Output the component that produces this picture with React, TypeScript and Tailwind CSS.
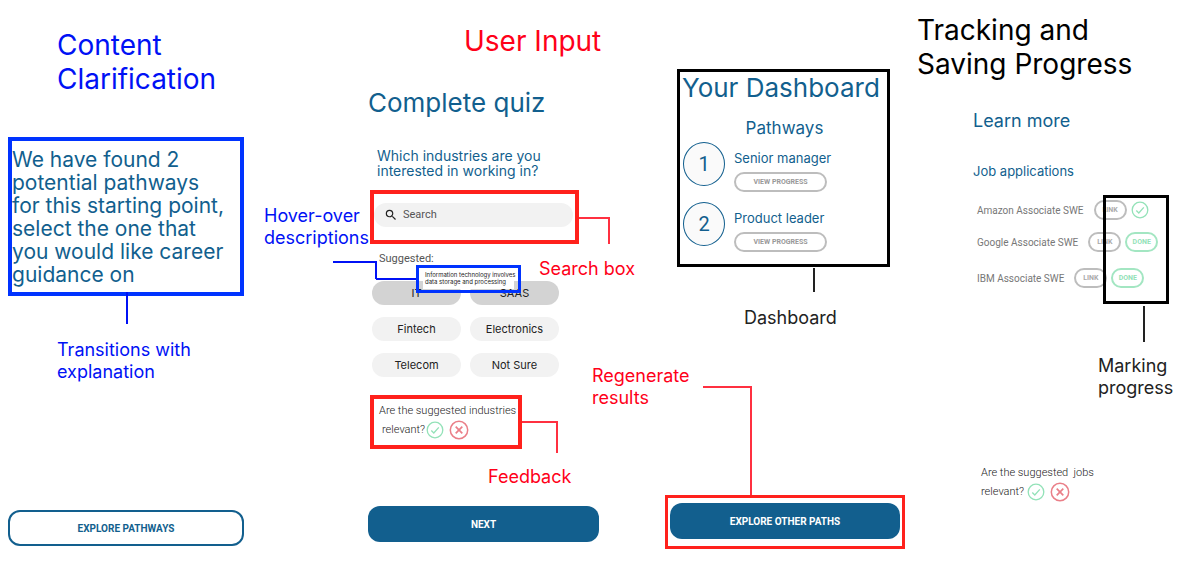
import type { ReactNode } from "react";
import { MdSearch } from "react-icons/md";

const note = "font-[Inter,sans-serif] text-[18px] leading-[22px]";
const heading = "font-[Inter,sans-serif] text-[28px] leading-[34px] font-normal";
const primary =
  "h-9 w-full rounded-xl bg-[#125f8e] font-[Roboto,sans-serif] text-[10px] font-bold text-white";

function Note({ className, children }: { className: string; children: ReactNode }) {
  return <p className={`${note} absolute whitespace-nowrap ${className}`}>{children}</p>;
}

function CheckButton({ label }: { label: string }) {
  return (
    <button type="button" aria-label={label} className="shrink-0">
      <svg viewBox="0 0 18 18" className="size-[18px]" fill="none" stroke="#93e2b8" strokeWidth="1.3">
        <circle cx="9" cy="9" r="7.8" />
        <path d="M5.3 9.5 7.8 12l5-5.6" />
      </svg>
    </button>
  );
}

function CrossButton({ label }: { label: string }) {
  return (
    <button type="button" aria-label={label} className="shrink-0">
      <svg viewBox="0 0 20 20" className="size-5" fill="none" stroke="#ea7f88" strokeWidth="1.5">
        <circle cx="10" cy="10" r="8.7" />
        <path d="m6.7 6.7 6.6 6.6m0-6.6-6.6 6.6" strokeWidth="1.7" />
      </svg>
    </button>
  );
}

function Chip({ label, active = false }: { label: string; active?: boolean }) {
  return (
    <button
      type="button"
      className={`h-6 rounded-full text-center text-[11px] text-[#222] ${active ? "bg-[#d3d3d3]" : "bg-[#f2f2f2]"}`}
    >
      {label}
    </button>
  );
}

function Pathway({ step, title }: { step: number; title: string }) {
  return (
    <li className="flex gap-[9px]">
      <span className="flex h-11 w-[42px] items-center justify-center rounded-[50%] border border-[#125f8e] bg-[#fafafa] font-[Roboto,sans-serif] text-[20px] text-[#125f8e]">
        {step}
      </span>
      <div className="flex flex-col items-start pt-2">
        <h4 className="text-[13px] leading-4">{title}</h4>
        <button
          type="button"
          className="mt-[6px] h-5 w-[93px] rounded-full border-2 border-[#bdbdbd] font-[Roboto,sans-serif] text-[7px] font-bold text-[#999]"
        >
          VIEW PROGRESS
        </button>
      </div>
    </li>
  );
}

function Job({ title, done = true }: { title: string; done?: boolean }) {
  const pill = "h-5 w-[33px] rounded-full border-2 text-[7px] font-bold";
  return (
    <li className="flex h-5 items-center font-[Roboto,sans-serif] text-[#777]">
      <span className="mr-[10px] text-[10px] whitespace-nowrap">{title}</span>
      <a href="#link" className={`${pill} mr-1 flex items-center justify-center border-[#bdbdbd] text-[#aaa]`}>
        LINK
      </a>
      {done ? (
        <button type="button" className={`${pill} border-[#a3e6c2] text-[#93e2b8]`}>
          DONE
        </button>
      ) : (
        <CheckButton label={`Mark ${title} as done`} />
      )}
    </li>
  );
}

export default function App() {
  return (
    <main className="grid min-h-screen grid-cols-[260fr_400fr_250fr_270fr] bg-white font-[Inter,sans-serif] text-[#125f8e]">
      <section className="flex flex-col items-start pb-[19px] pl-2">
        <h2 className={`${heading} mt-7 pl-[49px] text-[#0011f5]`}>
          Content
          <br />
          Clarification
        </h2>
        <div className="relative mt-[41px] w-[236px] border-4 border-[#0033ff] pt-[7px] pb-[6px]">
          <p className="whitespace-nowrap text-[21px] leading-[23px]">
            We have found 2
            <br />
            potential pathways
            <br />
            for this starting point,
            <br />
            select the one that
            <br />
            you would like career
            <br />
            guidance on
          </p>
          <span className="absolute top-full left-[114px] h-8 border-l-2 border-[#0011f5]" />
        </div>
        <p className={`${note} mt-[43px] pl-[49px] text-[#0011f5]`}>
          Transitions with
          <br />
          explanation
        </p>
        <button
          type="button"
          className="mt-auto h-9 w-[236px] rounded-xl border-2 border-[#125f8e] bg-white font-[Roboto,sans-serif] text-[10px] font-bold"
        >
          EXPLORE PATHWAYS
        </button>
      </section>

      <section className="flex flex-col items-start pb-[23px] pl-[108px]">
        <h2 className={`${heading} mt-6 pl-24 text-[#ff0019]`}>User Input</h2>
        <h3 className="mt-[29px] text-[26px] leading-8">Complete quiz</h3>
        <p className="mt-[29px] pl-[9px] text-[14px] leading-[15px] whitespace-nowrap">
          Which industries are you
          <br />
          interested in working in?
        </p>
        <div className="relative mt-3 ml-[2px] w-[209px] border-4 border-[#ff211c] pt-[9px] pr-[2px] pb-[13px]">
          <label className="flex h-6 items-center gap-[5px] rounded-full bg-[#f2f2f2] pl-[10px]">
            <MdSearch className="size-[14px] text-[#222]" aria-hidden="true" />
            <input
              type="search"
              placeholder="Search"
              aria-label="Search"
              className="w-36 bg-transparent font-[Roboto,sans-serif] text-[11px] outline-none placeholder:text-[#555] placeholder:opacity-100"
            />
          </label>
          <span className="absolute top-[23px] left-full ml-1 h-[27px] w-[31px] border-t-2 border-r-2 border-[#ff3040]" />
          <Note className="top-16 left-[165px] text-[#ff0019]">Search box</Note>
          <Note className="top-[11px] left-[-110px] text-[#0011f5]">
            Hover-over
            <br />
            descriptions
          </Note>
        </div>
        <p className="mt-[7px] pl-[11px] font-[Roboto,sans-serif] text-[11px] leading-4 text-[#555]">
          Suggested:
        </p>
        <div className="relative mt-[14px] ml-1 grid grid-cols-[89px_89px] gap-x-[9px] gap-y-3">
          <Chip label="IT" active />
          <Chip label="SAAS" active />
          <Chip label="Fintech" />
          <Chip label="Electronics" />
          <Chip label="Telecom" />
          <Chip label="Not Sure" />
          <div role="tooltip" className="absolute top-[-16px] left-11 h-7 w-[105px] border-[3px] border-[#0033ff] px-1 pt-[3px]">
            <p className="h-[18px] bg-white pl-[2px] text-[6px] leading-[7px] whitespace-nowrap text-[#222]">
              Information technology involves
              <br />
              data storage and processing
            </p>
          </div>
          <span className="absolute top-[-20px] left-[-39px] h-[18px] w-11 border-t-2 border-r-2 border-[#0011f5]" />
          <span className="absolute top-[-3px] left-1 w-10 border-t-2 border-[#0011f5]" />
        </div>
        <div className="relative mt-[18px] ml-[2px] w-[152px] border-4 border-[#ff211c] pt-[2px] pb-[5px] font-[Roboto,sans-serif] text-[11px] font-light text-[#222]">
          <p className="pl-[5px] leading-[19px] whitespace-nowrap">Are the suggested industries</p>
          <div className="flex h-5 items-center pl-2">
            <span className="mr-px">relevant?</span>
            <CheckButton label="Industries are relevant" />
            <span className="w-[5px]" />
            <CrossButton label="Industries are not relevant" />
          </div>
          <span className="absolute top-[22px] left-full ml-1 h-8 w-9 border-t-2 border-r-2 border-[#ff3040]" />
          <Note className="top-[67px] left-[114px] font-normal text-[#ff0019]">Feedback</Note>
        </div>
        <div className="mt-auto w-[231px]">
          <button type="button" className={primary}>
            NEXT
          </button>
        </div>
      </section>

      <section className="flex flex-col items-start pb-4 pl-[5px]">
        <div className="relative mt-[69px] ml-3 w-[213px] border-[3px] border-black pb-3 pl-[2px]">
          <h3 className="text-[26px] leading-8 whitespace-nowrap">Your Dashboard</h3>
          <h4 className="mt-3 text-center text-[17px] leading-6">Pathways</h4>
          <ul className="mt-[2px] flex flex-col gap-[10px] pl-px">
            <Pathway step={1} title="Senior manager" />
            <Pathway step={2} title="Product leader" />
          </ul>
          <span className="absolute top-full left-[133px] mt-1 h-6 border-l-2 border-[#222]" />
        </div>
        <p className={`${note} mt-10 pl-[79px] text-[#222]`}>Dashboard</p>
        <div className="relative mt-auto w-60 border-[3px] border-[#ff211c] px-[2px] pt-[5px] pb-[7px]">
          <button type="button" className={primary}>
            EXPLORE OTHER PATHS
          </button>
          <span className="absolute bottom-full left-[35px] mb-[3px] h-[109px] w-[49px] border-t-2 border-r-2 border-[#ff3040]" />
          <Note className="top-[-133px] left-[-76px] text-[#ff0019]">
            Regenerate
            <br />
            results
          </Note>
        </div>
      </section>

      <section className="flex flex-col items-start pl-[7px]">
        <h2 className={`${heading} mt-[13px] whitespace-nowrap text-black`}>
          Tracking and
          <br />
          Saving Progress
        </h2>
        <div className="pl-14">
          <h3 className="mt-7 text-[18px] leading-6">Learn more</h3>
          <h4 className="mt-[30px] text-[13px] leading-4">Job applications</h4>
          <div className="relative mt-[21px] pl-1">
            <ul>
              <Job title="Amazon Associate SWE" done={false} />
              <li className="h-3" aria-hidden="true" />
              <Job title="Google Associate SWE" />
              <li className="h-4" aria-hidden="true" />
              <Job title="IBM Associate SWE" />
            </ul>
            <div className="absolute top-[-5px] left-[130px] h-[109px] w-[66px] border-[3px] border-black">
              <span className="absolute top-full left-[37px] mt-[5px] h-9 border-l-2 border-[#222]" />
              <Note className="top-[157px] left-[-8px] text-[#222]">
                Marking
                <br />
                progress
              </Note>
            </div>
          </div>
          <div className="mt-[175px] pl-2 font-[Roboto,sans-serif] text-[11px] font-light text-[#222]">
            <p className="leading-[19px] whitespace-pre">Are the suggested  jobs</p>
            <div className="flex h-5 items-center">
              <span className="mr-[3px]">relevant?</span>
              <CheckButton label="Jobs are relevant" />
              <span className="w-[5px]" />
              <CrossButton label="Jobs are not relevant" />
            </div>
          </div>
        </div>
      </section>
    </main>
  );
}
